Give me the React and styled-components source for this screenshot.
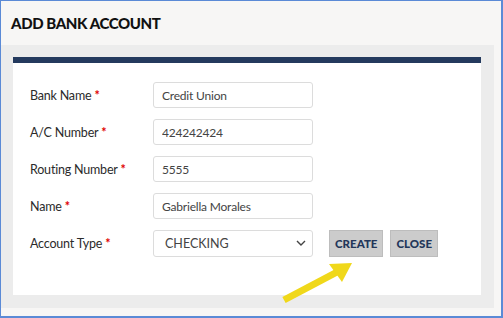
import React from "react";
import styled, { createGlobalStyle } from "styled-components";

const Global = createGlobalStyle`
  body {
    margin: 0;
    background: #ffffff;
    font-family: Lato, "Open Sans", sans-serif;
  }
`;

const fields = [
  { label: "Bank Name", value: "Credit Union" },
  { label: "A/C Number", value: "424242424" },
  { label: "Routing Number", value: "5555" },
  { label: "Name", value: "Gabriella Morales" },
];

export default function App() {
  return (
    <>
      <Global />
      <Frame>
        <Header>
          <Title>ADD BANK ACCOUNT</Title>
        </Header>
        <Body>
          <Card>
            {fields.map((f) => (
              <Row key={f.label}>
                <Label>
                  {f.label} <Req>*</Req>
                </Label>
                <Input defaultValue={f.value} />
              </Row>
            ))}
            <Row>
              <Label>
                Account Type <Req>*</Req>
              </Label>
              <SelectBox>
                <span>CHECKING</span>
                <svg width="10" height="6" viewBox="0 0 10 6">
                  <path d="M1 1l4 4 4-4" fill="none" stroke="#444" strokeWidth="1.4" />
                </svg>
              </SelectBox>
              <Button>CREATE</Button>
              <Button>CLOSE</Button>
            </Row>
          </Card>
        </Body>
        <Arrow width="80" height="48" viewBox="0 0 80 48">
          <path d="M5 41 L60 12" stroke="#f0d81a" strokeWidth="7" />
          <path d="M73 4 L50 5 L63 23 Z" fill="#f0d81a" />
        </Arrow>
      </Frame>
    </>
  );
}

const Frame = styled.div`
  position: relative;
  box-sizing: border-box;
  width: 503px;
  height: 318px;
  border: 1px solid #5b8ad6;
  border-right-width: 2px;
  border-bottom-width: 2px;
  background: #f7f6f5;
  overflow: hidden;
`;

const Header = styled.div`
  height: 44px;
  display: flex;
  align-items: center;
  padding-left: 10px;
`;

const Title = styled.h1`
  margin: 0;
  font-size: 15px;
  font-weight: 900;
  letter-spacing: -0.4px;
  color: #111;
`;

const Body = styled.div`
  background: #ececec;
  margin-right: 7px;
  padding: 12px 13px 13px 12px;
`;

const Card = styled.div`
  background: #ffffff;
  border-top: 6px solid #243a5e;
  padding: 19px 0 39px 17px;
  display: flex;
  flex-direction: column;
  gap: 11px;
`;

const Row = styled.div`
  display: flex;
  align-items: center;
  height: 26px;
`;

const Label = styled.div`
  width: 123px;
  font-size: 12.5px;
  letter-spacing: -0.2px;
  color: #2b2b2b;
`;

const Req = styled.span`
  color: #e00000;
  font-weight: 700;
`;

const Input = styled.input`
  box-sizing: border-box;
  width: 160px;
  height: 26px;
  border: 1px solid #dcdcdc;
  border-radius: 3px;
  padding: 0 8px;
  font-family: inherit;
  font-size: 12px;
  letter-spacing: -0.2px;
  color: #444;
  outline: none;
`;

const SelectBox = styled.div`
  box-sizing: border-box;
  width: 160px;
  height: 27px;
  border: 1px solid #dcdcdc;
  border-radius: 3px;
  padding: 0 6px 0 11px;
  display: flex;
  align-items: center;
  justify-content: space-between;
  font-size: 12.5px;
  color: #444;
  margin-right: 16px;
`;

const Button = styled.button`
  box-sizing: border-box;
  height: 27px;
  padding: 0 5px;
  margin-right: 7px;
  background: #cccccc;
  border: 1px solid #bdbdbd;
  font-family: inherit;
  font-size: 11.5px;
  font-weight: 900;
  color: #23375a;
`;

const Arrow = styled.svg`
  position: absolute;
  left: 278px;
  top: 258px;
`;
